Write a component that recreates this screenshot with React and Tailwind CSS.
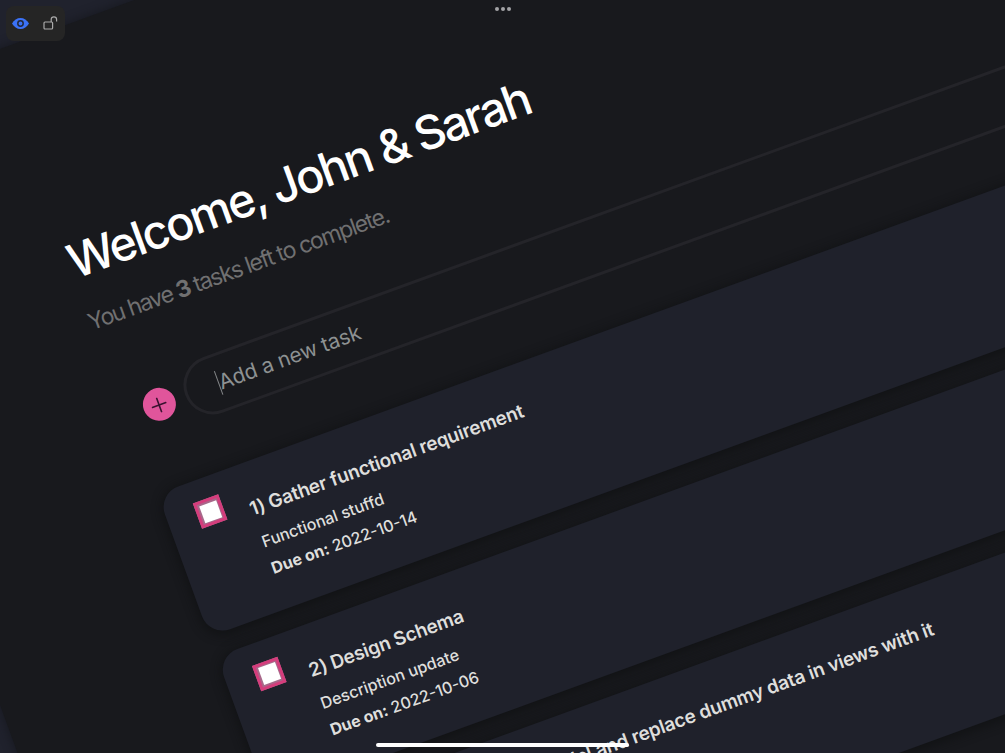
import React from "react";

const tasks = [
  {
    title: "1) Gather functional requirement",
    description: "Functional stuffd",
    due: "2022-10-14",
  },
  {
    title: "2) Design Schema",
    description: "Description update",
    due: "2022-10-06",
  },
  {
    title: "3) Create Core Data model and replace dummy data in views with it",
    description: "",
    due: "",
  },
];

const TaskCard = ({ task }) => (
  <li className="flex h-[151.5px] rounded-[22px] bg-[#1f212b] pl-[30px] pt-[21px] shadow-[0_2px_10px_3px_rgba(16,17,19,0.7)]">
    <div className="flex size-[27px] shrink-0 items-center justify-center border-[3px] border-[#d43d7c] bg-[#a8688a]">
      <div className="size-[18px] bg-white" />
    </div>
    <div className="ml-[25px] pt-[11.5px] whitespace-nowrap text-[16.1px] text-[#dededc]">
      <h2 className="text-[19px] leading-7 font-semibold tracking-[-0.2px]">{task.title}</h2>
      {task.description && (
        <>
          <p className="mt-1.5 leading-7 font-medium">{task.description}</p>
          <p className="leading-7 font-medium">
            <b className="font-bold">Due on:</b> {task.due}
          </p>
        </>
      )}
    </div>
  </li>
);

const NewTask = () => (
  <div className="flex items-center">
    <button className="flex size-[33px] shrink-0 items-center justify-center rounded-full bg-[#e0559b]">
      <svg viewBox="0 0 16 16" className="size-4" stroke="#3b1230" strokeWidth="1.6" strokeLinecap="round">
        <path d="M8 .8v14.4M.8 8h14.4" />
      </svg>
    </button>
    <div className="ml-[11px] flex h-[59px] w-[1200px] items-center rounded-full border-[3px] border-[#242429] pl-8">
      <span className="h-[25px] w-[1.5px] bg-[#85888a]" />
      <span className="text-[21px] tracking-[-0.2px] text-[#8d9192]">Add a new task</span>
    </div>
  </div>
);

const Toolbar = () => (
  <div className="absolute left-1.5 top-1.5 flex h-[35px] w-[59px] items-center rounded-lg bg-[#252525]">
    <svg viewBox="0 0 17 11" className="ml-1.5 h-[11px] w-[17px]">
      <path fill="#3b72f6" d="M0 5.5C2 2 5 0 8.500 0S15 2 17 5.500C15 9 12 11 8.500 11S2 9 0 5.500Z" />
      <circle cx="8.500" cy="5.500" r="2.700" fill="none" stroke="#22283a" strokeWidth="1.500" />
    </svg>
    <svg viewBox="0 0 15 14" className="mb-px ml-3.5 h-[14px] w-[15px]" fill="none" stroke="#aaa" strokeWidth="1.200">
      <rect x="1" y="6" width="8.600" height="7" rx="1" />
      <path d="M8.200 6V3.500a2.700 2.700 0 0 1 5.400 0V5.500" />
    </svg>
  </div>
);

const App = () => {
  return (
    <div className="relative h-[753px] w-[1005px] overflow-hidden bg-[#20222d] font-[Inter,sans-serif]">
      <div className="absolute left-0 top-0 origin-top-left rotate-[-20deg]">
        <main className="ml-[-241px] mt-[46px] h-[1300px] w-[1700px] bg-[#18191d] pt-[195px] shadow-[0_0_8px_2px_rgba(20,21,26,0.6)]">
          <header className="pl-[216px] whitespace-nowrap">
            <h1 className="text-[47px] leading-[60px] font-medium tracking-[-2.15px] text-white">
              Welcome, John &amp; Sarah
            </h1>
            <p className="mt-[17px] -ml-0.5 text-[23px] leading-8 tracking-[-1.45px] text-[#707071]">
              You have <b className="font-bold">3</b> tasks left to complete.
            </p>
          </header>
          <div className="mt-[55px] pl-[235.5px] whitespace-nowrap">
            <NewTask />
          </div>
          <ul className="ml-[220px] mt-[54px] flex w-[1300px] flex-col gap-[21px]">
            {tasks.map((task) => (
              <TaskCard key={task.title} task={task} />
            ))}
          </ul>
        </main>
      </div>

      <Toolbar />

      <div className="absolute inset-x-0 top-[7px] flex justify-center gap-0.5">
        <span className="size-1 rounded-full bg-[#a3a3a6]" />
        <span className="size-1 rounded-full bg-[#a3a3a6]" />
        <span className="size-1 rounded-full bg-[#a3a3a6]" />
      </div>

      <div className="absolute bottom-[6px] left-[376px] h-1 w-[253px] rounded-full bg-white" />
    </div>
  );
};

export default App;
